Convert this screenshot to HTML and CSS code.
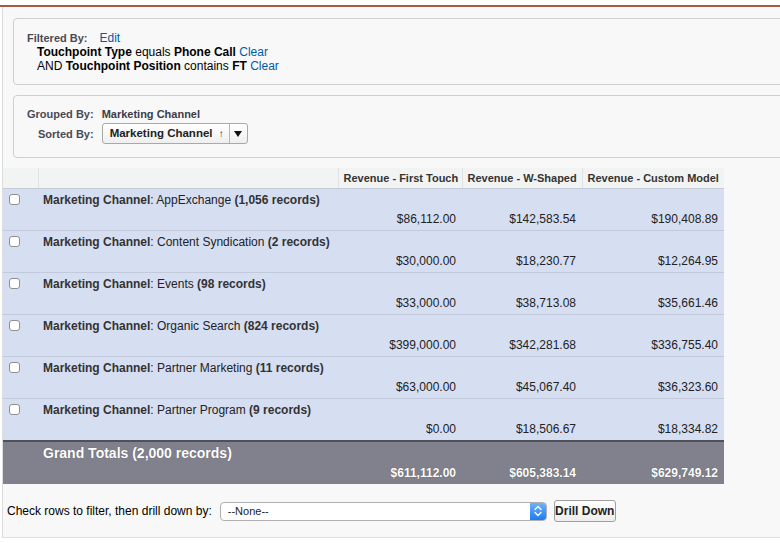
FILE: index.html
```html
<!DOCTYPE html>
<html>
<head>
<meta charset="utf-8">
<link rel="stylesheet" href="styles.css">
</head>
<body>
<div class="topbar"></div>
<div class="page">
  <div class="box filter">
    <div class="line"><span class="lbl">Filtered By:</span><a class="link edit">Edit</a></div>
    <div class="line indent"><b>Touchpoint Type</b> equals <b>Phone Call</b> <a class="link">Clear</a></div>
    <div class="line indent">AND <b>Touchpoint Position</b> contains <b>FT</b> <a class="link">Clear</a></div>
  </div>
  <div class="box group">
    <div class="grid">
      <span class="lbl right">Grouped By:</span>
      <span class="val">Marketing Channel</span>
      <span class="lbl right mid">Sorted By:</span>
      <div class="sortsel">
        <span class="sorttxt">Marketing Channel <span class="up">&#8593;</span></span>
        <span class="sortdd"><span class="tri"></span></span>
      </div>
    </div>
  </div>

  <table class="report">
    <colgroup>
      <col class="c1"><col class="c2"><col class="c3"><col class="c4"><col class="c5">
    </colgroup>
    <thead>
      <tr>
        <th></th>
        <th></th>
        <th>Revenue - First Touch</th>
        <th>Revenue - W-Shaped</th>
        <th>Revenue - Custom Model</th>
      </tr>
    </thead>
    <tbody>
      <tr>
        <td class="chk"><span class="cb"></span></td>
        <td class="label"><b>Marketing Channel</b>: AppExchange <b>(1,056 records)</b></td>
        <td class="num">$86,112.00</td><td class="num">$142,583.54</td><td class="num">$190,408.89</td>
      </tr>
      <tr>
        <td class="chk"><span class="cb"></span></td>
        <td class="label"><b>Marketing Channel</b>: Content Syndication <b>(2 records)</b></td>
        <td class="num">$30,000.00</td><td class="num">$18,230.77</td><td class="num">$12,264.95</td>
      </tr>
      <tr>
        <td class="chk"><span class="cb"></span></td>
        <td class="label"><b>Marketing Channel</b>: Events <b>(98 records)</b></td>
        <td class="num">$33,000.00</td><td class="num">$38,713.08</td><td class="num">$35,661.46</td>
      </tr>
      <tr>
        <td class="chk"><span class="cb"></span></td>
        <td class="label"><b>Marketing Channel</b>: Organic Search <b>(824 records)</b></td>
        <td class="num">$399,000.00</td><td class="num">$342,281.68</td><td class="num">$336,755.40</td>
      </tr>
      <tr>
        <td class="chk"><span class="cb"></span></td>
        <td class="label"><b>Marketing Channel</b>: Partner Marketing <b>(11 records)</b></td>
        <td class="num">$63,000.00</td><td class="num">$45,067.40</td><td class="num">$36,323.60</td>
      </tr>
      <tr>
        <td class="chk"><span class="cb"></span></td>
        <td class="label"><b>Marketing Channel</b>: Partner Program <b>(9 records)</b></td>
        <td class="num">$0.00</td><td class="num">$18,506.67</td><td class="num">$18,334.82</td>
      </tr>
      <tr class="total">
        <td></td>
        <td class="label">Grand Totals (2,000 records)</td>
        <td class="num">$611,112.00</td><td class="num">$605,383.14</td><td class="num">$629,749.12</td>
      </tr>
    </tbody>
  </table>

  <div class="drill">
    <span class="drilltxt">Check rows to filter, then drill down by:</span>
    <div class="select">
      <span class="seltxt">--None--</span>
      <span class="stepper">
        <svg width="16" height="18" viewBox="0 0 16 18">
          <path d="M5 7.5 L8 4.5 L11 7.5" fill="none" stroke="#fff" stroke-width="1.4" stroke-linecap="round" stroke-linejoin="round"/>
          <path d="M5 10.5 L8 13.5 L11 10.5" fill="none" stroke="#fff" stroke-width="1.4" stroke-linecap="round" stroke-linejoin="round"/>
        </svg>
      </span>
    </div>
    <button class="btn">Drill Down</button>
  </div>
</div>
</body>
</html>
```
FILE: styles.css
```css
html, body {
  margin: 0;
  padding: 0;
  background: #ffffff;
}
body {
  font-family: "Liberation Sans", Arial, Helvetica, sans-serif;
  font-size: 12px;
  color: #222;
}
.topbar {
  margin-top: 5px;
  height: 2px;
  background: #a6574c;
}
.page {
  margin-left: 2px;
  background: #f8f8f8;
  border-left: 1px solid #dcdcdc;
  border-bottom: 1px solid #e2e2e2;
  padding-top: 11px;
  overflow: hidden;
  box-sizing: border-box;
  height: 531px;
}
.box {
  margin-left: 10px;
  margin-right: -20px;
  border: 1px solid #cfcfcf;
  border-radius: 4px;
  background: #f8f8f8;
}
.filter {
  padding: 12px 0 11px 13px;
}
.line {
  line-height: 14px;
  height: 14px;
  color: #000;
  white-space: nowrap;
}
.indent {
  padding-left: 10px;
}
.lbl {
  font-weight: bold;
  font-size: 11px;
  color: #4a4a56;
  white-space: nowrap;
}
.link {
  color: #015ba7;
  text-decoration: none;
}
.edit {
  margin-left: 12px;
}
.group {
  margin-top: 10px;
  padding: 11px 0 13px 13px;
}
.grid {
  display: grid;
  grid-template-columns: auto auto;
  column-gap: 8px;
  row-gap: 2px;
  justify-content: start;
  align-items: center;
}
.right {
  text-align: right;
  line-height: 14px;
}
.val {
  font-weight: bold;
  font-size: 11px;
  color: #3c3c46;
  line-height: 14px;
  white-space: nowrap;
}
.sortsel {
  display: flex;
  height: 21px;
  box-sizing: border-box;
  width: 146px;
  border: 1px solid #a9a9a9;
  border-radius: 3px;
  background: linear-gradient(#ffffff, #efefef);
}
.sorttxt {
  flex: 1;
  padding-left: 7px;
  font-weight: bold;
  font-size: 11.5px;
  color: #222;
  line-height: 19px;
  border-right: 1px solid #b5b5b5;
  white-space: nowrap;
}
.up {
  font-size: 10px;
  margin-left: 3px;
  font-weight: normal;
}
.sortdd {
  width: 17px;
  display: flex;
  align-items: center;
  justify-content: center;
}
.tri {
  width: 0;
  height: 0;
  border-left: 4px solid transparent;
  border-right: 4px solid transparent;
  border-top: 6px solid #111;
}
.report {
  margin-top: 10px;
  border-collapse: collapse;
  table-layout: fixed;
  width: 721px;
}
.c1 { width: 35px; }
.c2 { width: 300px; }
.c3 { width: 124px; }
.c4 { width: 120px; }
.c5 { width: 142px; }
.report th {
  background: #f2f3f3;
  height: 20px;
  padding: 0 6px 0 5px;
  font-size: 11px;
  font-weight: bold;
  color: #333;
  text-align: left;
  border-left: 1px solid #e0e3e5;
  border-bottom: 1px solid #c4cad5;
  white-space: nowrap;
}
.report th:first-child {
  border-left: none;
}
.report td {
  background: #d6def2;
  height: 36px;
  border-bottom: 1px solid #c1c9db;
  padding: 0;
  line-height: 14px;
  white-space: nowrap;
}
.report td.chk {
  vertical-align: top;
  padding: 5px 0 0 6px;
}
.cb {
  display: block;
  width: 11px;
  height: 11px;
  box-sizing: border-box;
  border: 1px solid #8f8f8f;
  border-radius: 3px;
  background: #fff;
}
.report td.label {
  vertical-align: top;
  padding: 4px 0 0 5px;
  color: #222;
}
.report td.label b {
  color: #333;
}
.report td.num {
  vertical-align: bottom;
  text-align: right;
  padding: 0 6px 4px 0;
  color: #222;
}
.report tr.total td {
  background: #80818d;
  border-top: 2px solid #50525b;
  border-bottom: none;
  color: #fff;
  height: 38px;
}
.report tr.total td.label {
  font-size: 14px;
  font-weight: bold;
  line-height: 16px;
  padding-top: 3px;
  color: #fff;
  text-shadow: 0 0 1px rgba(0,0,0,0.35);
}
.report tr.total td.num {
  font-weight: bold;
  color: #fff;
  text-shadow: 0 0 1px rgba(0,0,0,0.45);
}
.drill {
  display: flex;
  align-items: center;
  margin-top: 16px;
  padding-left: 4px;
  height: 22px;
}
.drilltxt {
  font-size: 12px;
  color: #000;
}
.select {
  margin-left: 8px;
  width: 327px;
  height: 19px;
  box-sizing: border-box;
  display: flex;
  border: 1px solid #b0b0b0;
  border-radius: 4px;
  background: #fff;
  overflow: hidden;
}
.seltxt {
  flex: 1;
  padding-left: 7px;
  font-size: 11px;
  line-height: 17px;
  color: #222;
}
.stepper {
  width: 16px;
  height: 17px;
  background: linear-gradient(#6fb2fb, #1b7cf2);
  display: flex;
}
.stepper svg {
  display: block;
  margin-top: -0.5px;
}
.btn {
  margin-left: 7px;
  height: 22px;
  width: 62px;
  padding: 0;
  font-family: "Liberation Sans", Arial, sans-serif;
  font-size: 12px;
  font-weight: bold;
  color: #222;
  background: linear-gradient(#ffffff, #ededed);
  border: 1px solid #a0a0a0;
  border-radius: 3px;
}
```
